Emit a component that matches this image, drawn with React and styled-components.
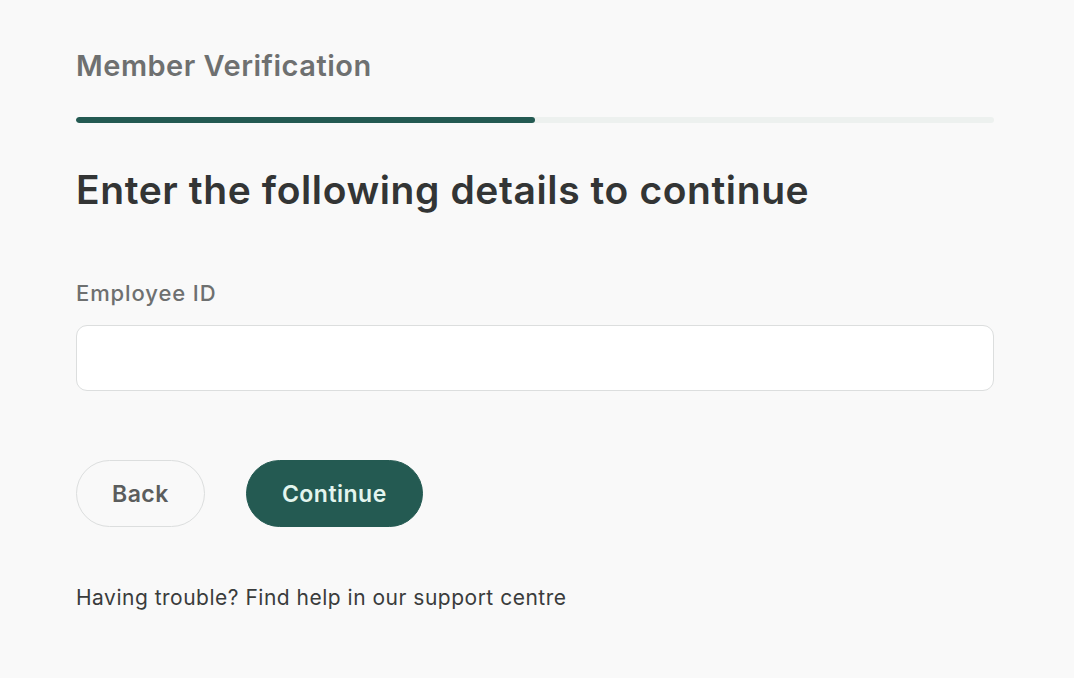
import React, { useState } from 'react';
import styled, { createGlobalStyle } from 'styled-components';

const GlobalStyle = createGlobalStyle`
  html, body {
    margin: 0;
    padding: 0;
    background: #f9f9f9;
  }
  body {
    font-family: Inter, "Noto Sans", sans-serif;
  }
`;

const Page = styled.div`
  width: 918px;
  padding: 46px 0 0 76px;
  display: flex;
  flex-direction: column;
`;

const StepTitle = styled.h1`
  margin: 0;
  font-size: 29px;
  font-weight: 600;
  letter-spacing: 0.5px;
  color: #6e7070;
  line-height: 40px;
`;

const Track = styled.div`
  margin-top: 31px;
  height: 6px;
  border-radius: 3px;
  background: #edf1ef;
  overflow: hidden;
`;

const Fill = styled.div`
  height: 100%;
  border-radius: 3px;
  background: #245a52;
`;

const Heading = styled.h2`
  margin: 42px 0 0;
  font-size: 39px;
  font-weight: 600;
  letter-spacing: 0.6px;
  color: #333535;
  line-height: 50px;
`;

const Label = styled.label`
  margin-top: 62px;
  font-size: 22px;
  font-weight: 500;
  letter-spacing: 0.9px;
  color: #6e7070;
  line-height: 32px;
`;

const Input = styled.input`
  margin-top: 16px;
  height: 66px;
  box-sizing: border-box;
  border: 1.5px solid #dcdede;
  border-radius: 11px;
  background: #fff;
  padding: 0 20px;
  font: inherit;
  font-size: 20px;
  outline: none;
`;

const Actions = styled.div`
  margin-top: 69px;
  display: flex;
  gap: 41px;
`;

const Button = styled.button`
  height: 67px;
  padding: 0 35px;
  border-radius: 34px;
  font-family: inherit;
  font-size: 23px;
  font-weight: 600;
  letter-spacing: 0.5px;
  cursor: pointer;
  border: 1.5px solid ${(p) => (p.primary ? '#245a52' : '#dcdede')};
  background: ${(p) => (p.primary ? '#245a52' : 'transparent')};
  color: ${(p) => (p.primary ? '#e3f5ee' : '#5b5d5d')};
`;

const Help = styled.p`
  margin: 56px 0 0;
  font-size: 21px;
  letter-spacing: 0.5px;
  color: #3a3c3c;
  line-height: 30px;
`;

export default function App() {
  const [employeeId, setEmployeeId] = useState('');
  const progress = 50;

  return (
    <>
      <GlobalStyle />
      <Page>
        <StepTitle>Member Verification</StepTitle>
        <Track>
          <Fill style={{ width: `${progress}%` }} />
        </Track>
        <Heading>Enter the following details to continue</Heading>
        <Label htmlFor="employee-id">Employee ID</Label>
        <Input
          id="employee-id"
          value={employeeId}
          onChange={(e) => setEmployeeId(e.target.value)}
        />
        <Actions>
          <Button>Back</Button>
          <Button primary>Continue</Button>
        </Actions>
        <Help>Having trouble? Find help in our support centre</Help>
      </Page>
    </>
  );
}
